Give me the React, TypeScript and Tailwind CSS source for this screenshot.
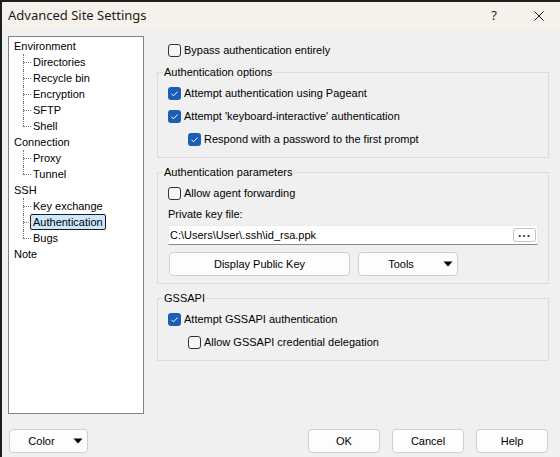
import React from "react";

type Node = { label: string; children?: string[] };

const tree: Node[] = [
  { label: "Environment", children: ["Directories", "Recycle bin", "Encryption", "SFTP", "Shell"] },
  { label: "Connection", children: ["Proxy", "Tunnel"] },
  { label: "SSH", children: ["Key exchange", "Authentication", "Bugs"] },
  { label: "Note" },
];

const selected = "Authentication";

function CheckBox({ checked }: { checked: boolean }) {
  if (checked) {
    return (
      <span className="flex h-[13px] w-[13px] shrink-0 items-center justify-center rounded-[3px] bg-[#1a5fb4]">
        <svg width="13" height="13" viewBox="0 0 13 13">
          <polyline points="3.5,6.8 5.5,8.8 9.5,4.6" fill="none" stroke="#ffffff" strokeWidth="1" />
        </svg>
      </span>
    );
  }
  return <span className="h-[13px] w-[13px] shrink-0 rounded-[3px] border border-[#333333] bg-[#f6f6f6]" />;
}

function Option({ label, checked, indent }: { label: string; checked: boolean; indent?: boolean }) {
  return (
    <div className={"flex h-[23px] items-center " + (indent ? "pl-[20px]" : "")}>
      <CheckBox checked={checked} />
      <span className="ml-[3px]">{label}</span>
    </div>
  );
}

function Arrow() {
  return (
    <svg width="10" height="6" viewBox="0 0 10 6" className="shrink-0">
      <polygon points="0.5,0.5 9.5,0.5 5,5.5" fill="#000000" />
    </svg>
  );
}

function Group({ title, children }: { title: string; children: React.ReactNode }) {
  return (
    <fieldset className="mt-[7px] min-w-0 border border-[#dcdcdc] p-0">
      <legend className="ml-[5px] h-[14px] px-[1px] leading-[14px]">{title}</legend>
      <div className="px-[10px] pb-[6px] pt-[3px]">{children}</div>
    </fieldset>
  );
}

function Connector({ last }: { last: boolean }) {
  return (
    <span className="relative h-[16px] w-[7px] shrink-0">
      <span
        className={
          "absolute left-0 top-0 border-l border-dotted border-[#7a7a7a] " + (last ? "h-[8px]" : "h-[16px]")
        }
      />
      <span className="absolute left-0 top-[8px] w-[8px] border-t border-dotted border-[#7a7a7a]" />
    </span>
  );
}

function Tree() {
  return (
    <div className="h-[378px] w-[136px] shrink-0 border border-[#838383] bg-white pt-[1px] text-black">
      {tree.map((n) => (
        <div key={n.label}>
          <div className="flex h-[16px] items-center pl-[5px]">{n.label}</div>
          {n.children?.map((c, i) => (
            <div key={c} className="flex h-[16px] items-center pl-[14px]">
              <Connector last={i === n.children!.length - 1} />
              <span
                className={
                  "flex h-[16px] items-center rounded-[2px] border px-[2px] " +
                  (c === selected ? "border-[#1b1b1b] bg-[#cce8ff]" : "border-transparent")
                }
              >
                {c}
              </span>
            </div>
          ))}
        </div>
      ))}
    </div>
  );
}

const btn = "flex h-[24px] items-center rounded-[4px] border border-[#d0d0d0] bg-[#fdfdfd]";

export default function App() {
  return (
    <div className="flex h-[457px] w-[560px] flex-col overflow-hidden border-l-2 border-t-2 border-[#1f1f1f] bg-[#f0f0f0] font-['Liberation_Sans',Arial,sans-serif] text-[11px] text-black">
      <div className="flex h-[27px] shrink-0 items-center bg-[#f7f1eb] pl-[6px]">
        <span className="font-['Noto_Sans',sans-serif] text-[13px] text-[#1a1a1a]">Advanced Site Settings</span>
        <span className="ml-auto font-['Noto_Sans',sans-serif] text-[13px] text-[#1a1a1a]">?</span>
        <svg width="10" height="10" viewBox="0 0 10 10" className="ml-[37px] mr-[16px]">
          <path d="M0.5 0.5 L9.5 9.5 M9.5 0.5 L0.5 9.5" stroke="#1a1a1a" strokeWidth="1" />
        </svg>
      </div>

      <div className="flex pl-[6px] pt-[7px]">
        <Tree />
        <div className="ml-[13px] w-[392px] pt-[6px]">
          <div className="flex h-[16px] items-center pl-[11px]">
            <CheckBox checked={false} />
            <span className="ml-[3px]">Bypass authentication entirely</span>
          </div>

          <Group title="Authentication options">
            <Option label="Attempt authentication using Pageant" checked />
            <Option label="Attempt 'keyboard-interactive' authentication" checked />
            <Option label="Respond with a password to the first prompt" checked indent />
          </Group>

          <Group title="Authentication parameters">
            <Option label="Allow agent forwarding" checked={false} />
            <div className="flex h-[18px] items-center">Private key file:</div>
            <div className="mt-[2px] flex h-[20px] items-center border border-[#ececec] border-b-[#8a8a8a] bg-white pl-[1px] pr-[1px]">
              <span>C:\Users\User\.ssh\id_rsa.ppk</span>
              <span className="ml-auto flex h-[14px] w-[23px] items-end justify-center rounded-[3px] border border-[#c4c4c4] bg-white pb-[2px] text-[12px] font-bold leading-none tracking-[1px] text-[#2a2a6a]">
                ...
              </span>
            </div>
            <div className="mt-[7px] flex pb-[1px]">
              <div className={btn + " ml-[1px] w-[181px] justify-center"}>Display Public Key</div>
              <div className={btn + " ml-[8px] w-[100px]"}>
                <span className="flex-1 text-center">Tools</span>
                <span className="mr-[4px]">
                  <Arrow />
                </span>
              </div>
            </div>
          </Group>

          <Group title="GSSAPI">
            <Option label="Attempt GSSAPI authentication" checked />
            <Option label="Allow GSSAPI credential delegation" checked={false} indent />
          </Group>
        </div>
      </div>

      <div className="mt-[15px] flex pl-[7px] pr-[12px]">
        <div className={btn + " w-[79px]"}>
          <span className="flex-1 text-center">Color</span>
          <span className="mr-[4px]">
            <Arrow />
          </span>
        </div>
        <div className="ml-auto flex gap-[12px]">
          <div className={btn + " w-[72px] justify-center border-[#005fb8]"}>OK</div>
          <div className={btn + " w-[72px] justify-center"}>Cancel</div>
          <div className={btn + " w-[72px] justify-center"}>Help</div>
        </div>
      </div>
    </div>
  );
}
